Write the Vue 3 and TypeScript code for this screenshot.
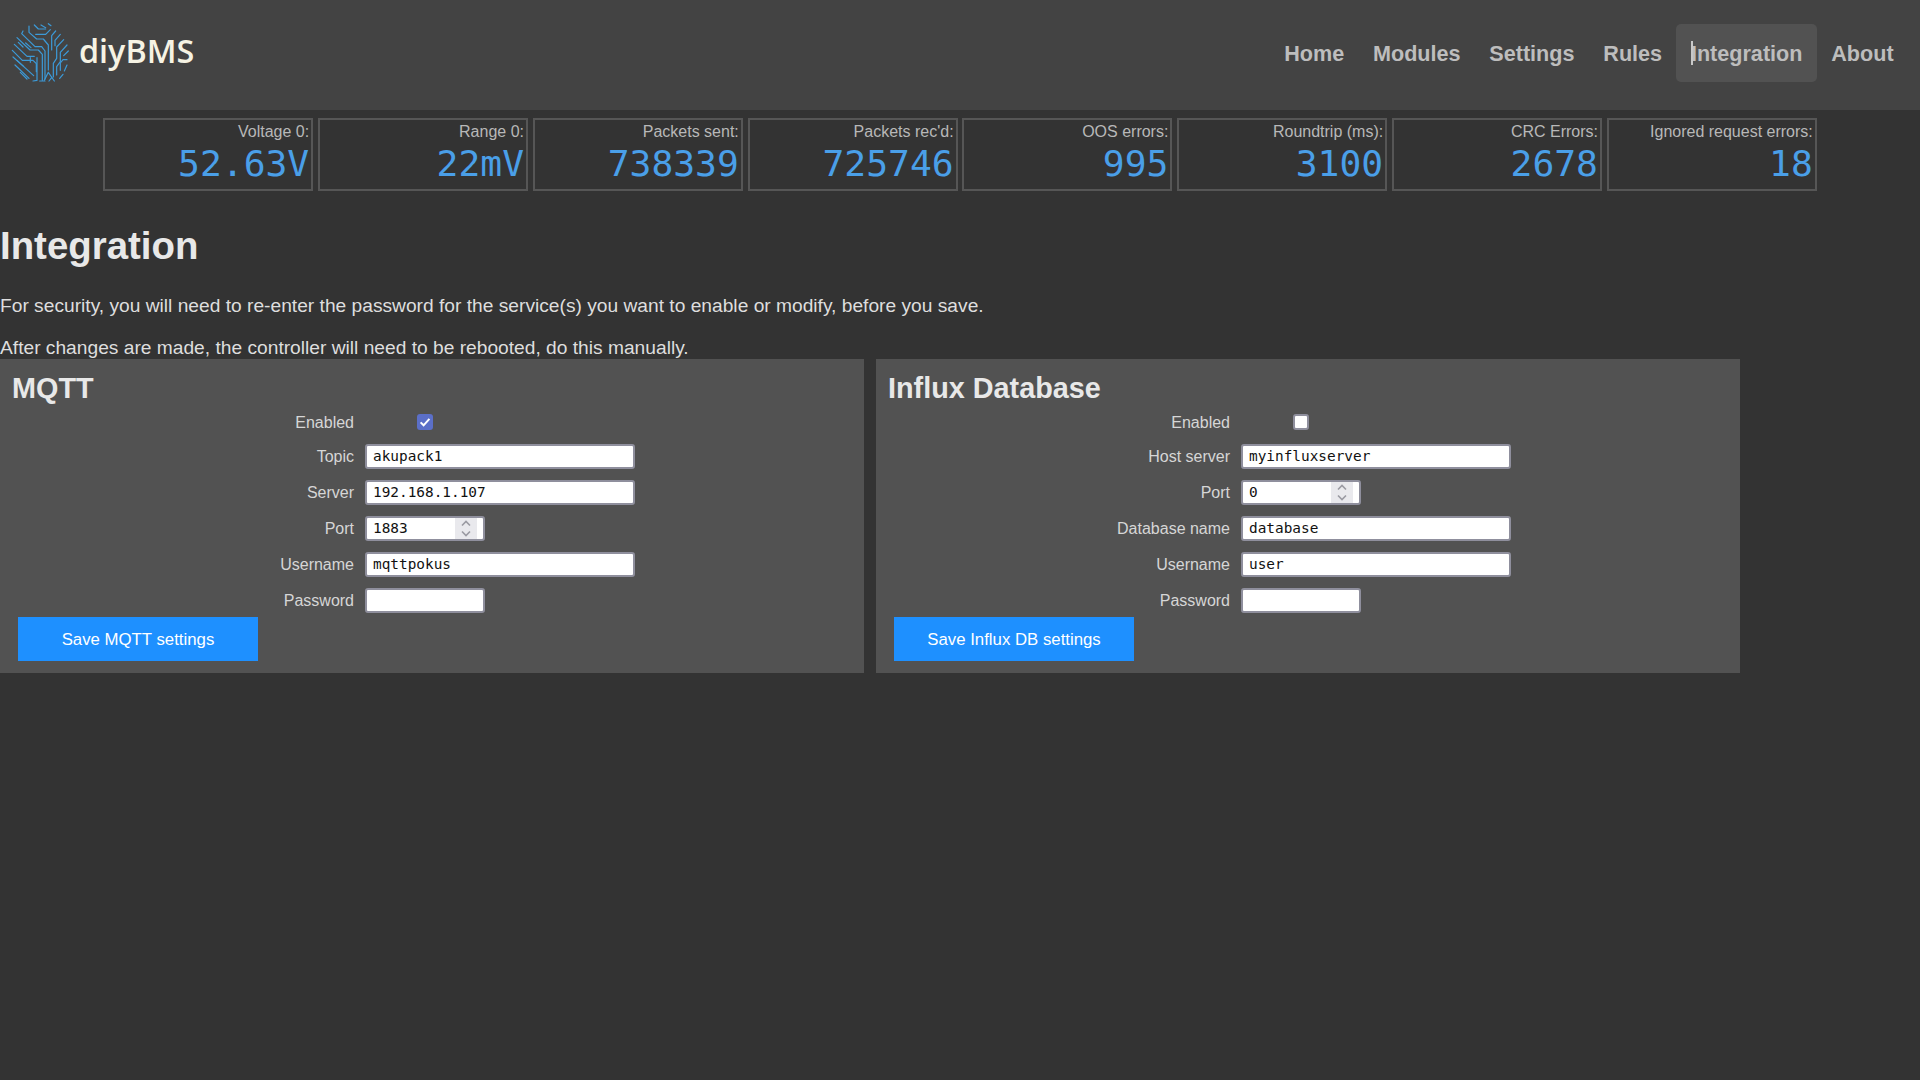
<script setup lang="ts">
const nav = ['Home', 'Modules', 'Settings', 'Rules', 'Integration', 'About']
const stats = [
  ['Voltage 0:', '52.63V'],
  ['Range 0:', '22mV'],
  ['Packets sent:', '738339'],
  ["Packets rec'd:", '725746'],
  ['OOS errors:', '995'],
  ['Roundtrip (ms):', '3100'],
  ['CRC Errors:', '2678'],
  ['Ignored request errors:', '18'],
]
const circuit = [
  'M72 33V52L95 72H115L130 90V165',
  'M88 30L100 42H122',
  'M92 58H122L136 44',
  'M108 30L122 38',
  'M152 48L140 62V105',
  'M166 58L150 76V92',
  'M176 74L155 96V130L145 145V186',
  'M186 90L166 112V140L155 155V180',
  'M190 108L176 122',
  'M186 134H174L166 144V166',
  'M54 48L50 56L90 95H110L120 108V192',
  'M36 68L75 105H100L112 118V196',
  'M28 88L66 124H88',
  'M22 106L52 136H84L94 146V170',
  'M76 128V142',
  'M24 126L62 160L86 182',
  'M30 150L72 190',
  'M46 172L66 192',
  'M96 128V196L84 198',
  'M104 198H120',
  'M118 196L130 172L148 198',
  'M132 198L140 188',
  'M40 82L54 96',
  'M62 84L78 98',
  'M138 32L130 26',
  'M174 178L164 190',
  'M186 150L178 168',
  'M36 136L56 154',
]
</script>

<template>
  <div class="page">
    <header class="topbar">
      <div class="logo">
        <svg class="mark" width="70" height="75" viewBox="0 0 210 225" aria-hidden="true">
          <path v-for="d in circuit" :key="d" :d="d" />
        </svg>
        <span class="wordmark">diyBMS</span>
      </div>
      <nav class="nav">
        <a v-for="n in nav" :key="n" class="nav-link" :class="{ active: n === 'Integration' }">
          <i v-if="n === 'Integration'" class="caret"></i>{{ n }}
        </a>
      </nav>
    </header>

    <section class="stats">
      <div v-for="s in stats" :key="s[0]" class="stat">
        <div class="stat-label">{{ s[0] }}</div>
        <div class="stat-value">{{ s[1] }}</div>
      </div>
    </section>

    <main>
      <h1>Integration</h1>
      <p>For security, you will need to re-enter the password for the service(s) you want to enable or modify, before you save.</p>
      <p>After changes are made, the controller will need to be rebooted, do this manually.</p>

      <div class="panels">
        <form class="panel" @submit.prevent>
          <h2>MQTT</h2>
          <div class="fields">
            <label class="check-label">Enabled</label>
            <span class="check-cell">
              <span class="check on">
                <svg width="16" height="16" viewBox="0 0 16 16"><path d="M3.6 8.4 6.6 11.3 12.4 4.9" /></svg>
              </span>
            </span>
            <label>Topic</label>
            <input class="long" type="text" value="akupack1" />
            <label>Server</label>
            <input class="long" type="text" value="192.168.1.107" />
            <label>Port</label>
            <span class="num">
              <input type="text" value="1883" />
              <span class="spin">
                <svg width="22" height="21" viewBox="0 0 22 21"><path d="M7 7.5 11 3.5 15 7.5M7 13.5 11 17.5 15 13.5" /></svg>
              </span>
            </span>
            <label>Username</label>
            <input class="long" type="text" value="mqttpokus" />
            <label>Password</label>
            <input class="short" type="password" />
          </div>
          <button type="button">Save MQTT settings</button>
        </form>

        <form class="panel" @submit.prevent>
          <h2>Influx Database</h2>
          <div class="fields">
            <label class="check-label">Enabled</label>
            <span class="check-cell"><span class="check"></span></span>
            <label>Host server</label>
            <input class="long" type="text" value="myinfluxserver" />
            <label>Port</label>
            <span class="num">
              <input type="text" value="0" />
              <span class="spin">
                <svg width="22" height="21" viewBox="0 0 22 21"><path d="M7 7.5 11 3.5 15 7.5M7 13.5 11 17.5 15 13.5" /></svg>
              </span>
            </span>
            <label>Database name</label>
            <input class="long" type="text" value="database" />
            <label>Username</label>
            <input class="long" type="text" value="user" />
            <label>Password</label>
            <input class="short" type="password" />
          </div>
          <button type="button">Save Influx DB settings</button>
        </form>
      </div>
    </main>
  </div>
</template>

<style>
html, body { margin: 0; background: #333; }
</style>

<style scoped>
.page {
  min-height: 1080px;
  background: #333;
  color: #eee;
  font-family: "Liberation Sans", Arial, sans-serif;
  font-size: 16px;
}
.topbar {
  height: 110px;
  background: #434343;
  display: flex;
  justify-content: space-between;
  box-sizing: border-box;
}
.logo { display: flex; align-items: flex-start; padding: 15px 0 0 5px; }
.mark { display: block; }
.mark path { fill: none; stroke: #3c9ad8; stroke-width: 3.6; stroke-linecap: round; stroke-linejoin: round; }
.wordmark {
  font-family: "Open Sans", sans-serif;
  font-weight: 600;
  font-size: 32.3px;
  line-height: 40px;
  color: #f6f3e4;
  margin-left: 4px;
  margin-top: 14.5px;
}
.nav { display: flex; align-items: flex-start; padding-top: 24px; padding-right: 12px; }
.nav-link {
  position: relative;
  display: block;
  height: 58px;
  line-height: 59px;
  padding: 0 14.4px;
  font-size: 21.6px;
  font-weight: 700;
  color: #bdbdbd;
  border-radius: 5px;
}
.nav-link.active { background: #525252; margin-left: -0.6px; padding-left: 15px; }
.caret {
  position: absolute;
  left: 15px;
  top: 17px;
  width: 2px;
  height: 24px;
  background: #c8c8c8;
}
.stats {
  display: flex;
  justify-content: center;
  gap: 4.8px;
  padding-top: 8px;
}
.stat {
  width: 210px;
  height: 73px;
  box-sizing: border-box;
  border: 2px solid #565656;
  padding: 2px;
  text-align: right;
}
.stat-label { font-size: 16px; line-height: 20px; color: #b8b8b8; }
.stat-value {
  font-family: "DejaVu Sans Mono", monospace;
  font-size: 36.3px;
  line-height: 42px;
  margin-top: 1px;
  color: #4a9fe8;
}
h1 {
  margin: 0;
  padding-top: 33px;
  font-size: 38.4px;
  line-height: 44px;
  font-weight: 700;
  color: #e8e8e8;
}
p {
  margin: 27px 0 0;
  font-size: 19.2px;
  line-height: 22px;
  color: #dedede;
}
p + p { margin-top: 20px; }
.panels { display: flex; gap: 12px; margin-top: 0; }
.panel {
  width: 864px;
  height: 314px;
  background: #525252;
  box-sizing: border-box;
  padding: 12px;
}
h2 {
  margin: 0;
  padding-top: 1px;
  font-size: 28.8px;
  line-height: 33px;
  font-weight: 700;
  color: #e8e8e8;
}
.fields {
  display: grid;
  grid-template-columns: 342px 270px;
  column-gap: 11px;
  row-gap: 11px;
  align-items: center;
  justify-items: start;
  margin-top: 7px;
}
.fields label { justify-self: end; color: #d6d6d6; line-height: 18px; }
.check-cell { display: flex; justify-content: center; width: 120px; height: 16px; margin-bottom: 1px; }
.fields .check-label { margin-top: 2px; margin-bottom: 1px; }
.check {
  display: block;
  width: 16px;
  height: 16px;
  box-sizing: border-box;
  background: #fff;
  border: 2.5px solid #8f8f9d;
  border-radius: 3px;
}
.check.on { background: #5b6fc8; border: 0; }
.check svg { display: block; }
.check path { fill: none; stroke: #fff; stroke-width: 2; }
input {
  box-sizing: border-box;
  height: 25px;
  border: 2px solid #8f8f9d;
  border-radius: 3px;
  background: #fff;
  color: #111;
  padding: 0 6px 1px;
  font-family: "DejaVu Sans Mono", monospace;
  font-size: 14.4px;
  outline: none;
}
.long { width: 270px; }
.short { width: 120px; }
.num {
  display: flex;
  align-items: center;
  box-sizing: border-box;
  width: 120px;
  height: 25px;
  background: #fff;
  border: 2px solid #8f8f9d;
  border-radius: 3px;
}
.num input { border: 0; height: 21px; width: 88px; background: transparent; }
.spin { display: block; width: 22px; height: 21px; background: #e9e9ed; margin-left: auto; margin-right: 6px; flex: none; }
.spin svg { display: block; }
.spin path { fill: none; stroke: #9a9aa2; stroke-width: 1.6; }
button {
  display: block;
  width: 240px;
  height: 44px;
  margin: 4px 0 0 6px;
  background: #1e90ff;
  color: #fff;
  border: 0;
  font-family: "Liberation Sans", Arial, sans-serif;
  font-size: 16.8px;
  padding: 1px 0 0;
}
</style>
